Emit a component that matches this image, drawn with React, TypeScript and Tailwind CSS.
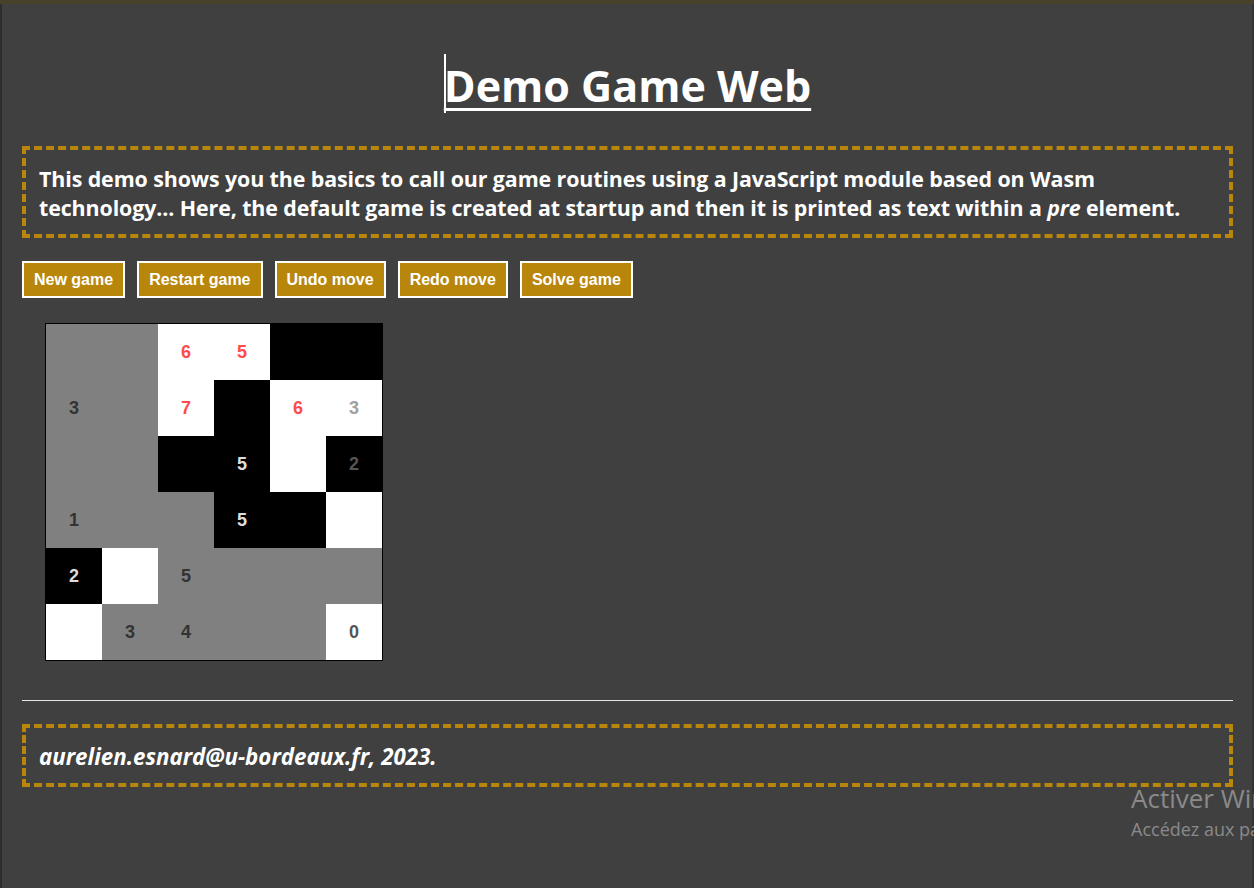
import React from "react";

type Cell = { c: "g" | "w" | "b"; n?: string; t?: string };

const G = (n?: string, t?: string): Cell => ({ c: "g", n, t });
const W = (n?: string, t?: string): Cell => ({ c: "w", n, t });
const B = (n?: string, t?: string): Cell => ({ c: "b", n, t });

const RED = "text-[#ff4b4b]";
const DARK = "text-[#333333]";
const LIGHT = "text-[#dddddd]";

const grid: Cell[][] = [
  [G(), G(), W("6", RED), W("5", RED), B(), B()],
  [G("3", DARK), G(), W("7", RED), B(), W("6", RED), W("3", "text-[#a0a0a0]")],
  [G(), G(), B(), B("5", LIGHT), W(), B("2", "text-[#555555]")],
  [G("1", DARK), G(), G(), B("5", LIGHT), B(), W()],
  [B("2", LIGHT), W(), G("5", DARK), G(), G(), G()],
  [W(), G("3", DARK), G("4", DARK), G(), G(), W("0", "text-[#555555]")],
];

const bg = { g: "bg-[#808080]", w: "bg-white", b: "bg-black" };

const buttons = ["New game", "Restart game", "Undo move", "Redo move", "Solve game"];

export default function App() {
  return (
    <div className="relative w-[1254px] h-[888px] overflow-hidden bg-[#404040] font-['Open_Sans',sans-serif] text-white">
      <div className="h-[4px] bg-[#46432a]" />
      <div className="absolute left-0 top-[4px] bottom-0 w-[2px] bg-[#2e2e2e]" />
      <div className="absolute right-0 top-[4px] bottom-0 w-[2px] bg-[#333333]" />
      <div className="px-[22px] pr-[21px]">
        <div className="flex justify-center pt-[52px]">
          <h1 className="relative text-[43px] font-bold leading-[60px] underline decoration-[3px] underline-offset-[6px]">
            <span className="absolute left-0 top-[-2px] h-[59px] w-[2px] bg-white" />
            Demo Game Web
          </h1>
        </div>
        <div className="mt-[30px] border-4 border-dashed border-[#b8860b] px-[13px] pt-[14px] pb-[12px] text-[21.4px] font-bold leading-[29px] tracking-[-0.1px]">
          This demo shows you the basics to call our game routines using a JavaScript module based on Wasm technology... Here, the default game is created at startup and then it is printed as text within a <i>pre</i> element.
        </div>
        <div className="mt-[23px] flex gap-[12px] font-['Liberation_Sans',Arial,sans-serif]">
          {buttons.map((b) => (
            <div
              key={b}
              className="flex h-[37px] items-center border-2 border-white bg-[#b8860b] px-[10px] text-[16px] font-bold"
            >
              {b}
            </div>
          ))}
        </div>
        <div className="ml-[23px] mt-[25px] w-[338px] border border-black">
          <div className="grid grid-cols-6 font-['Liberation_Sans',Arial,sans-serif]">
            {grid.flat().map((cell, i) => (
              <div
                key={i}
                className={`flex h-[56px] items-center justify-center text-[18px] font-bold ${bg[cell.c]} ${cell.t ?? ""}`}
              >
                {cell.n}
              </div>
            ))}
          </div>
        </div>
        <div className="mt-[39px] h-[1px] bg-[#e6e6e6]" />
        <div className="mt-[23px] border-4 border-dashed border-[#b8860b] px-[13px] pt-[14px] pb-[12px] text-[22.3px] font-bold italic leading-[29px]">
          aurelien.esnard@u-bordeaux.fr, 2023.
        </div>
      </div>
      <div className="absolute left-[1131px] top-[780px] whitespace-nowrap text-[#8a8a8a]">
        <div className="text-[26px] leading-[36px]">Activer Windows</div>
        <div className="text-[18px] leading-[26px]">Accédez aux paramètres</div>
      </div>
    </div>
  );
}
